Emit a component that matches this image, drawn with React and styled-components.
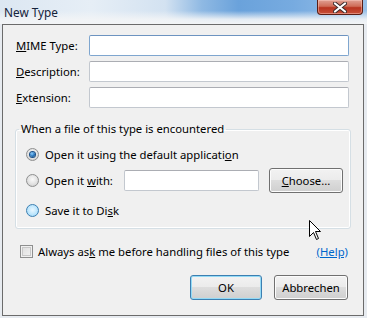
import styled, { createGlobalStyle } from 'styled-components';

const Global = createGlobalStyle`
    body {
        margin: 0;
        font-family: "Noto Sans", "Open Sans", sans-serif;
        font-size: 11.3px;
        color: #000;
    }
`;

const Window = styled.div`
    position: relative;
    width: 367px;
    height: 318px;
    display: flex;
    flex-direction: column;
    overflow: hidden;
    background: #e7ebf0;
`;

const TitleBar = styled.div`
    height: 24px;
    flex: none;
    display: flex;
    justify-content: space-between;
    align-items: flex-start;
    background:
        linear-gradient(to bottom, rgba(242,244,246,0) 0%, rgba(242,244,246,0) 45%, rgba(242,244,246,0.9) 80%, #f2f4f6 100%),
        linear-gradient(to right, #dce7f2 0%, #e6eef6 25%, #d3e2f1 45%, #8fb9e3 55%, #6aa2db 65%, #77abe0 80%, #9ac1e8 100%);
`;

const Title = styled.span`
    padding: 4px 0 0 4px;
    font-size: 11.8px;
    color: #15233a;
`;

const CloseButton = styled.div`
    width: 44px;
    height: 14px;
    margin-right: 4px;
    display: flex;
    align-items: center;
    justify-content: center;
    border: 1px solid #5a1d14;
    border-top: none;
    border-radius: 0 0 4px 4px;
    background: linear-gradient(to bottom, #e0a193 0%, #cf6c57 45%, #b8341f 55%, #c8503a 100%);
    box-shadow: inset 0 0 0 1px rgba(255,210,200,0.45);
`;

const Panel = styled.div`
    flex: 1;
    margin: 0 3px 2px 2px;
    border: 1px solid #6b6b6b;
    background: #f0f0f0;
    display: flex;
    flex-direction: column;
`;

const Fields = styled.div`
    margin: 10px 0 0 13px;
    display: grid;
    grid-template-columns: 73px 260px;
    grid-auto-rows: 21px;
    row-gap: 5px;
    align-items: center;
`;

const Label = styled.label`
    white-space: nowrap;
`;

const TextBox = styled.div`
    box-sizing: border-box;
    height: 21px;
    width: ${p => p.$width || '100%'};
    background: #fff;
    border: 1px solid ${p => p.$focus ? '#7fa6cf' : '#c3c8cf'};
    border-top-color: ${p => p.$focus ? '#6d93c0' : '#abadb3'};
    border-radius: 2px;
`;

const Group = styled.fieldset`
    box-sizing: border-box;
    margin: 13px 0 0 12px;
    width: 336px;
    height: 108px;
    padding: 0 0 0 10px;
    border: 1px solid #d5dfe5;
    border-radius: 3px;
    box-shadow: inset 0 0 0 1px #fff;
`;

const Legend = styled.legend`
    margin-left: -7px;
    padding: 0 2px;
    line-height: 16px;
`;

const OptionRow = styled.div`
    height: ${p => p.$h}px;
    margin-top: ${p => p.$mt}px;
    display: flex;
    align-items: center;
`;

const Radio = styled.span`
    box-sizing: border-box;
    width: 13px;
    height: 13px;
    flex: none;
    margin-right: 6px;
    border-radius: 50%;
    border: 1px solid ${p => p.$state === 'hot' ? '#3c7fb1' : '#8e8f8f'};
    background: ${p => p.$state === 'hot'
        ? 'radial-gradient(circle at 50% 45%, #eaf7ff 0%, #bde6fd 55%, #8fcff5 100%)'
        : 'radial-gradient(circle at 50% 40%, #fafafa 0%, #e2e2e2 55%, #c4c4c4 100%)'};
    display: flex;
    align-items: center;
    justify-content: center;
    &::after {
        content: '';
        display: ${p => p.$state === 'checked' ? 'block' : 'none'};
        width: 5px;
        height: 5px;
        border-radius: 50%;
        background: radial-gradient(circle at 40% 35%, #8fd0ff 0%, #2a79c0 50%, #0d3f75 100%);
        box-shadow: 0 0 0 1px #1a4f86;
    }
`;

const WithLabel = styled.span`
    width: 79px;
    flex: none;
`;

const Button = styled.div`
    box-sizing: border-box;
    width: ${p => p.$width}px;
    height: 25px;
    margin-left: ${p => p.$ml || 0}px;
    display: flex;
    align-items: center;
    justify-content: center;
    border: 1px solid ${p => p.$default ? '#3c7fb1' : '#707070'};
    border-radius: 3px;
    background: linear-gradient(to bottom, #f2f2f2 0%, #ebebeb 49%, #dddddd 50%, #cfcfcf 100%);
    box-shadow: inset 0 0 0 1px ${p => p.$default ? '#93daf6' : '#fcfcfc'};
`;

const CheckRow = styled.div`
    margin: 12px 0 0 17px;
    padding-right: 15px;
    height: 20px;
    display: flex;
    align-items: center;
`;

const CheckBox = styled.span`
    box-sizing: border-box;
    width: 13px;
    height: 13px;
    margin-right: 5px;
    border: 1px solid #8e8f8f;
    background: linear-gradient(135deg, #dcdcdc 0%, #f4f4f4 100%);
    box-shadow: inset 0 0 0 1px #f0f0f0, inset 0 0 0 2px #c8c8c8;
`;

const Help = styled.span`
    margin-left: auto;
    color: #0066cc;
    text-decoration: underline;
`;

const ButtonBar = styled.div`
    margin-top: 14px;
    padding-right: 15px;
    display: flex;
    justify-content: flex-end;
`;

const Cursor = styled.svg`
    position: absolute;
    left: 309px;
    top: 220px;
`;

function App() {
    return (
        <Window>
            <Global/>
            <TitleBar>
                <Title>New Type</Title>
                <CloseButton>
                    <svg width="14" height="11" viewBox="0 0 14 11">
                        <path d="M2 1.5 L12 9.5 M12 1.5 L2 9.5" stroke="#3a2a2a" strokeWidth="4" strokeLinecap="round"/>
                        <path d="M2 1.5 L12 9.5 M12 1.5 L2 9.5" stroke="#fff" strokeWidth="2.2" strokeLinecap="round"/>
                    </svg>
                </CloseButton>
            </TitleBar>
            <Panel>
                <Fields>
                    <Label><u>M</u>IME Type:</Label>
                    <TextBox $focus/>
                    <Label><u>D</u>escription:</Label>
                    <TextBox/>
                    <Label><u>E</u>xtension:</Label>
                    <TextBox/>
                </Fields>
                <Group>
                    <Legend>When a file of this type is encountered</Legend>
                    <OptionRow $h={22} $mt={6}>
                        <Radio $state="checked"/>
                        <span>Open it using the default applicati<u>o</u>n</span>
                    </OptionRow>
                    <OptionRow $h={26} $mt={2}>
                        <Radio/>
                        <WithLabel>Open it <u>w</u>ith:</WithLabel>
                        <TextBox $width="135px"/>
                        <Button $width={74} $ml={10}><span><u>C</u>hoose...</span></Button>
                    </OptionRow>
                    <OptionRow $h={22} $mt={6}>
                        <Radio $state="hot"/>
                        <span>Save it to Di<u>s</u>k</span>
                    </OptionRow>
                </Group>
                <CheckRow>
                    <CheckBox/>
                    <span>Always as<u>k</u> me before handling files of this type</span>
                    <Help>(Help)</Help>
                </CheckRow>
                <ButtonBar>
                    <Button $width={72} $default>OK</Button>
                    <Button $width={74} $ml={12}>Abbrechen</Button>
                </ButtonBar>
            </Panel>
            <Cursor width="13" height="21" viewBox="0 0 13 21">
                <path d="M0.5 0.5 L0.5 16.5 L4.5 12.5 L7.5 19.5 L9.5 18.5 L6.5 11.5 L11.5 11.5 Z" fill="#fff" stroke="#000" strokeWidth="1"/>
            </Cursor>
        </Window>
    );
}

export default App;
